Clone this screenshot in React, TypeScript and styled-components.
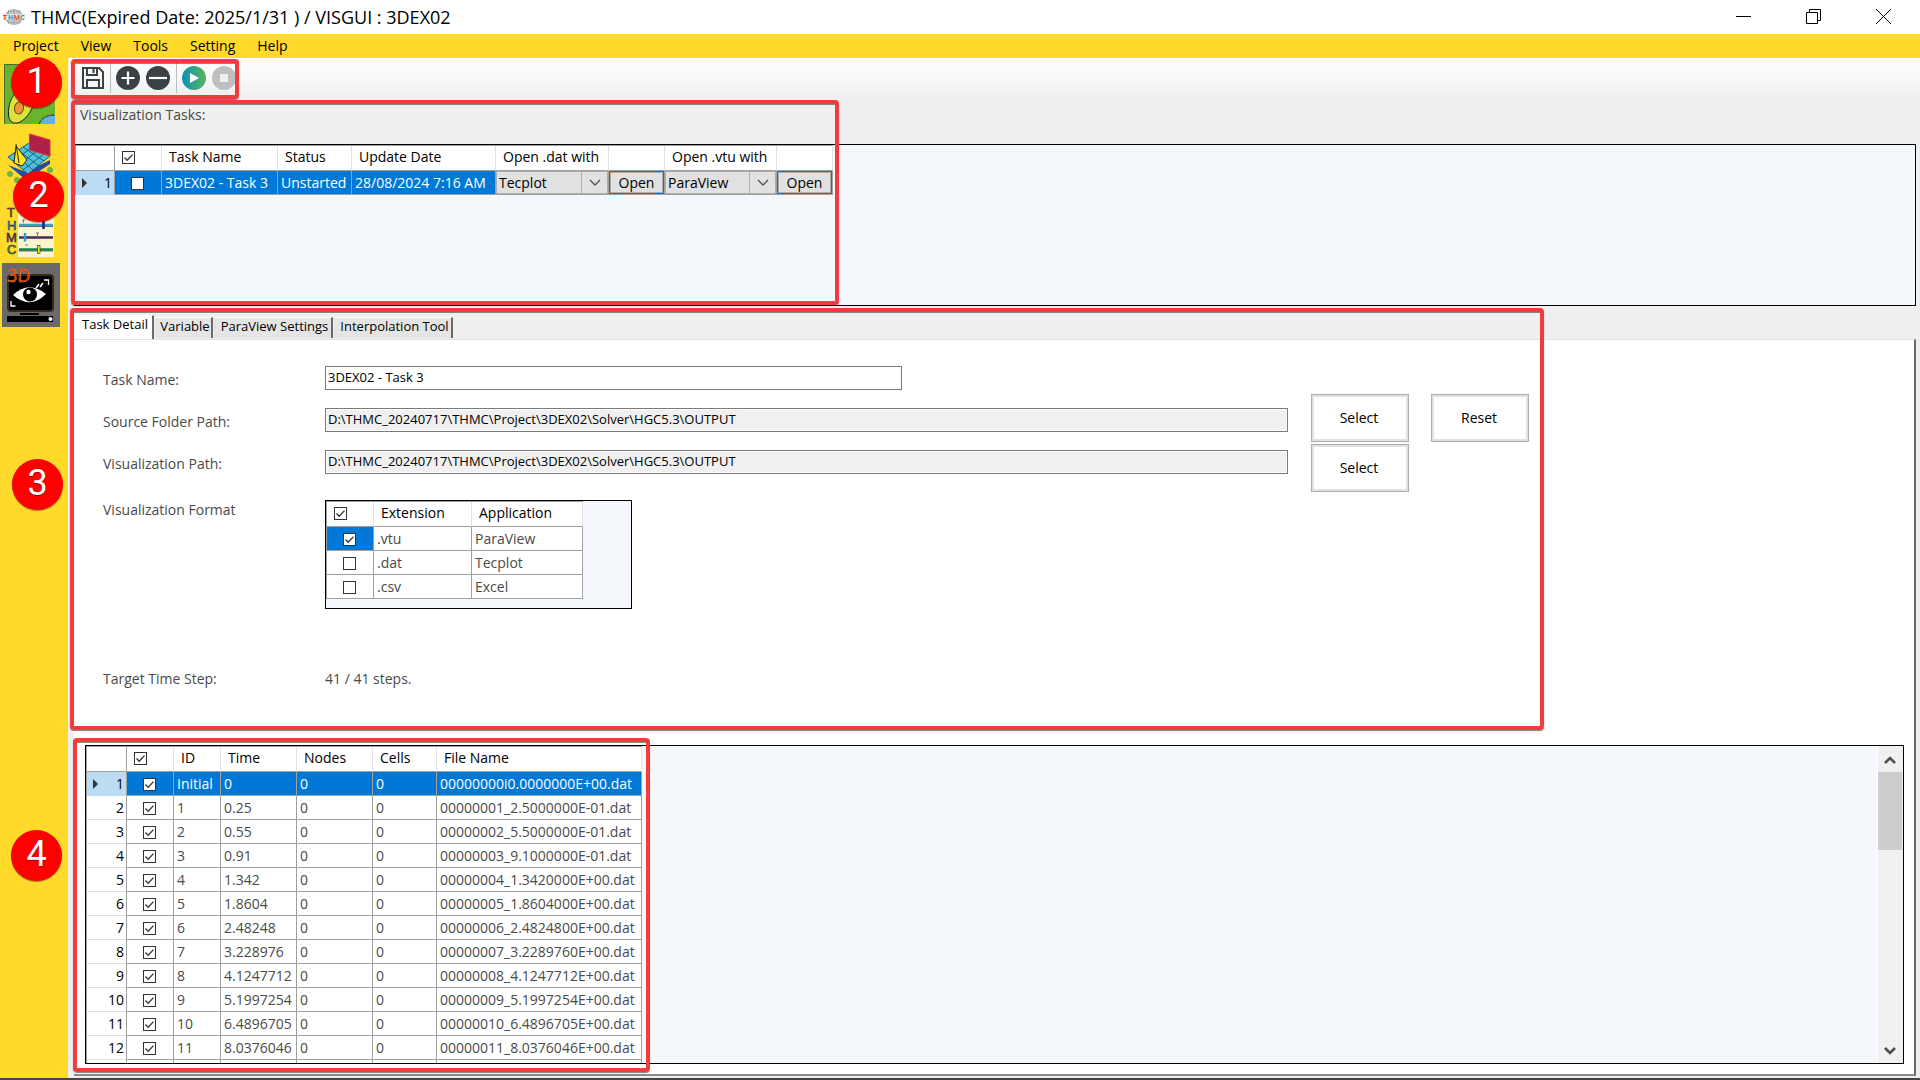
import React from "react";
import styled, { createGlobalStyle, css } from "styled-components";

const INK = "#4a4a4a";
const LINE = "#a0a0a0";
const BLUE = "#0078d7";
const YELLOW = "#ffda2b";
const RED = "#f23b3d";

const GlobalStyle = createGlobalStyle`
  * { box-sizing: border-box; }
  body { margin: 0; font: 14px/20px "Open Sans", "Noto Sans", sans-serif; color: #000; }
  button, input, select { font: inherit; color: inherit; margin: 0; }
`;

const Window = styled.div`
  position: relative;
  display: flex;
  flex-direction: column;
  height: 100vh;
  overflow: hidden;
  background: #efefef;
`;

/* ---------- title and menu ---------- */

const TitleBar = styled.header`
  display: flex;
  align-items: center;
  height: 34px;
  flex: none;
  padding: 0 2px 0 3px;
  background: #fff;
`;

const Title = styled.h1`
  flex: 1;
  margin: 0 0 0 6px;
  font-size: 18px;
  line-height: 32px;
  font-weight: 400;
`;

const CaptionButton = styled.button`
  display: grid;
  place-items: center;
  width: 70px;
  height: 34px;
  padding: 0 0 1px;
  border: 0;
  background: none;
`;

const MenuBar = styled.nav`
  display: flex;
  gap: 22px;
  height: 24px;
  flex: none;
  padding-left: 13px;
  background: ${YELLOW};
`;

const MenuItem = styled.button`
  padding: 0;
  border: 0;
  background: none;
  line-height: 24px;
`;

/* ---------- frame ---------- */

const Body = styled.div`
  display: flex;
  flex: 1;
  min-height: 0;
`;

const Sidebar = styled.aside`
  display: flex;
  flex-direction: column;
  align-items: flex-start;
  width: 68px;
  flex: none;
  padding: 7px 0 0 2px;
  gap: 2px;
  background: ${YELLOW};
`;

const SideButton = styled.button<{ $active?: boolean }>`
  width: 58px;
  height: 64px;
  padding: 0;
  border: 0;
  background: ${(p) => (p.$active ? "#696969" : "none")};
  svg { display: block; overflow: visible; }
`;

const Main = styled.main`
  display: flex;
  flex-direction: column;
  flex: 1;
  min-width: 0;
  padding: 0 4px 2px 6px;
`;

const Toolbar = styled.div`
  display: flex;
  align-items: center;
  gap: 6px;
  height: 40px;
  flex: none;
  margin: 0 -4px 0 -5px;
  padding-left: 13px;
  background: linear-gradient(#fdfdfd, #f7f7f7 60%, #efefef);
`;

const ToolButton = styled.button`
  padding: 0;
  border: 0;
  background: none;
  svg { display: block; }
`;

const ToolDivider = styled.span`
  width: 1px;
  height: 30px;
  margin-right: -1px;
  background: #bdbdbd;
`;

const Caption = styled.h2`
  flex: none;
  height: 46px;
  margin: 0;
  padding: 7px 0 0 6px;
  font-size: 14px;
  line-height: 20px;
  font-weight: 400;
  color: ${INK};
`;

const GridPanel = styled.div<{ $height?: number; $width?: number }>`
  display: flex;
  align-items: flex-start;
  justify-content: space-between;
  ${(p) => (p.$height ? css`height: ${p.$height}px; flex: none;` : css`flex: 1; min-height: 0;`)}
  ${(p) => p.$width && css`width: ${p.$width}px;`}
  overflow: hidden;
  border: 1px solid #000;
  background: #f4f7fc;
`;

/* ---------- data grid ---------- */

const Grid = styled.table`
  flex: none;
  table-layout: fixed;
  width: 0;
  border-collapse: separate;
  border-spacing: 0;
  border-top: 1px solid ${LINE};
  border-left: 1px solid ${LINE};
  background: #fff;
  white-space: nowrap;
`;

const HeadCell = styled.th<{ $strong?: boolean }>`
  height: 25px;
  padding: 0 0 2px 7px;
  border-right: 1px solid ${(p) => (p.$strong ? LINE : "#e2e2e2")};
  border-bottom: 1px solid ${LINE};
  color: #000;
  text-align: left;
  font-weight: 400;
  line-height: 22px;
`;

const Cell = styled.td<{ $selected?: boolean }>`
  height: 24px;
  padding: 0 0 0 3px;
  border-right: 1px solid ${LINE};
  border-bottom: 1px solid ${LINE};
  color: ${(p) => (p.$selected ? "#fff" : INK)};
  background: ${(p) => (p.$selected ? BLUE : "#fff")};
  line-height: 22px;
`;

const CheckCell = styled(Cell)`
  padding: 0 2px 0 0;
  text-align: center;
`;

const ControlCell = styled(Cell)`
  padding: 0;
  background: #e1e1e1;
  color: #000;
`;

const RowHead = styled.th<{ $current?: boolean }>`
  height: 24px;
  padding: 0 2px 0 6px;
  border-right: 1px solid ${LINE};
  border-bottom: 1px solid ${(p) => (p.$current ? "#bcdcf4" : "#e2e2e2")};
  background: ${(p) => (p.$current ? "#bcdcf4" : "#fff")};
  font-weight: 400;
  line-height: 22px;
`;

const RowHeadInner = styled.span`
  display: flex;
  align-items: center;
  justify-content: space-between;
`;

const Pointer = styled.span<{ $visible?: boolean }>`
  border: 5px solid transparent;
  border-right-width: 0;
  border-left-color: ${(p) => (p.$visible ? "#333" : "transparent")};
`;

const Tick = styled.input`
  appearance: none;
  width: 13px;
  height: 13px;
  border: 1px solid #333;
  background: #fff;
`;

const TickBox = styled.span`
  display: inline-grid;
  vertical-align: -2px;
  > * { grid-area: 1 / 1; }
  svg { pointer-events: none; }
`;

const Picker = styled.span`
  display: grid;
  grid-template-columns: 1fr 25px;
  align-items: center;
  height: 23px;
  border: 1px solid #adadad;
  svg { grid-area: 1 / 2; justify-self: center; pointer-events: none; }
`;

const PickerSelect = styled.select`
  grid-area: 1 / 1 / 2 / 3;
  appearance: none;
  height: 21px;
  padding: 0 0 0 2px;
  border: 0;
  border-radius: 0;
  background: linear-gradient(#adadad, #adadad) right 25px top / 1px 100% no-repeat #e1e1e1;
`;

const OpenButton = styled.button`
  display: block;
  width: 100%;
  height: 23px;
  padding: 0;
  border: 1px solid ${BLUE};
  outline: 1px solid #adadad;
  outline-offset: -2px;
  background: #e1e1e1;
  line-height: 20px;
`;

/* ---------- tabs and form ---------- */

const TabStrip = styled.div`
  display: flex;
  align-items: flex-end;
  gap: 1px;
  height: 33px;
  flex: none;
`;

const Tab = styled.button<{ $active?: boolean; $width: number }>`
  display: flex;
  align-items: flex-start;
  justify-content: center;
  width: ${(p) => p.$width}px;
  height: ${(p) => (p.$active ? 25 : 21)}px;
  margin-bottom: ${(p) => (p.$active ? -1 : 1)}px;
  padding: 0 0 0 4px;
  border: 0;
  border-top: 1px solid #fff;
  border-right: 2px solid #696969;
  background: ${(p) => (p.$active ? "#fff" : "#e5e5e5")};
  font-size: 13px;
  line-height: 16px;
  white-space: nowrap;
`;

const TabPage = styled.section`
  display: flex;
  flex-direction: column;
  flex: 1;
  min-height: 0;
  padding: 26px 10px 10px 11px;
  border-top: 1px solid #e3e3e3;
  border-right: 2px solid #696969;
  border-bottom: 2px solid #8a8a8a;
  background: #fff;
`;

const Columns = styled.div`
  display: flex;
  align-items: flex-start;
  padding-left: 18px;
  height: 379px;
  flex: none;
  color: ${INK};
`;

const Fields = styled.form`
  display: flex;
  flex-direction: column;
  gap: 18px;
`;

const Field = styled.div<{ $gapAbove?: number }>`
  display: flex;
  align-items: flex-start;
  margin-top: ${(p) => p.$gapAbove ?? 0}px;
`;

const FieldLabel = styled.label<{ $flush?: boolean }>`
  width: 222px;
  flex: none;
  padding-top: ${(p) => (p.$flush ? 0 : 4)}px;
  line-height: 19px;
`;

const TextBox = styled.input<{ $width: number }>`
  width: ${(p) => p.$width}px;
  height: 24px;
  padding: 0 2px 3px;
  border: 1px solid #7a7a7a;
  color: #000;
  background: #fff;
  font-size: 13px;
  &:read-only { background: #f0f0f0; box-shadow: inset 0 0 0 1px #fff; }
`;

const Actions = styled.div`
  display: grid;
  grid-template-columns: 98px 98px;
  gap: 2px 22px;
  padding: 28px 0 0 23px;
`;

const PushButton = styled.button`
  height: 48px;
  padding: 0 2px 0 0;
  border: 1px solid #adadad;
  box-shadow: inset 0 0 0 2px #e1e1e1;
  background: #fff;
  color: #000;
`;

const Value = styled.output`
  padding-top: 4px;
  line-height: 19px;
`;

/* ---------- scrollbar ---------- */

const ScrollBar = styled.div`
  display: flex;
  flex-direction: column;
  align-self: stretch;
  width: 26px;
  padding-right: 1px;
  background: #f0f0f0;
  border-left: 1px solid #fff;
`;

const ScrollArrow = styled.button`
  display: grid;
  place-items: center;
  height: 26px;
  padding: 2px 0 0;
  border: 0;
  background: none;
`;

const ScrollTrack = styled.div`
  flex: 1;
`;

const ScrollThumb = styled.div`
  height: 78px;
  background: #cdcdcd;
`;

const StatusEdge = styled.footer`
  height: 2px;
  flex: none;
  background: #444;
`;

/* ---------- guide marks that lie over the window ---------- */

const Highlight = styled.div<{ $x: number; $y: number; $w: number; $h: number }>`
  position: absolute;
  left: ${(p) => p.$x}px;
  top: ${(p) => p.$y}px;
  width: ${(p) => p.$w}px;
  height: ${(p) => p.$h}px;
  border: 4px solid ${RED};
  border-radius: 4px;
  box-shadow: 0 1px 1px rgba(0, 0, 0, 0.5), inset 0 1px 0 rgba(0, 0, 0, 0.45);
  pointer-events: none;
`;

const Marker = styled.span<{ $x: number; $y: number }>`
  position: absolute;
  left: ${(p) => p.$x}px;
  top: ${(p) => p.$y}px;
  width: 51px;
  height: 51px;
  border-radius: 50%;
  background: #fe0000;
  box-shadow: 0 1px 1px rgba(0, 0, 0, 0.4);
  color: #fff;
  font: 36px/48px Roboto, sans-serif;
  text-align: center;
  text-shadow: 0 1px 1px rgba(0, 0, 0, 0.4);
`;

/* ---------- pieces ---------- */

function CheckBox({ checked, label }: { checked: boolean; label: string }) {
  return (
    <TickBox>
      <Tick type="checkbox" defaultChecked={checked} aria-label={label} />
      {checked && (
        <svg width="13" height="13" viewBox="0 0 13 13" fill="none" stroke="#333" strokeWidth="1.3">
          <path d="M2.5 6.5 5.2 9.2 10.5 3.6" />
        </svg>
      )}
    </TickBox>
  );
}

function Chevron({ up, bold }: { up?: boolean; bold?: boolean }) {
  return (
    <svg width="12" height="8" viewBox="0 0 12 8" fill="none" stroke="#505050" strokeWidth={bold ? 2.6 : 1.3}>
      <path d={up ? "M1 7 6 2 11 7" : "M1 1 6 6 11 1"} />
    </svg>
  );
}

function RowNumber({ n, current }: { n: number; current?: boolean }) {
  return (
    <RowHead scope="row" $current={current}>
      <RowHeadInner>
        <Pointer $visible={current} />
        {n}
      </RowHeadInner>
    </RowHead>
  );
}

function AppLogo() {
  return (
    <svg width="22" height="18" viewBox="0 0 22 18">
      <ellipse cx="11" cy="9" rx="9" ry="8" fill="#c3c7c9" />
      <path d="M4 5 Q11 1 18 5M4 13Q11 17 18 13M11 1V17M6 2Q3 9 6 16M16 2Q19 9 16 16" fill="none" stroke="#8f969a" strokeWidth="1" strokeDasharray="2 1" />
      <rect x="0" y="6" width="22" height="6" fill="#e2e2e2" />
      <g fontFamily="Open Sans, sans-serif" fontSize="7" fontWeight="700">
        <text x="0" y="11.5" fill="#e0482e">T</text>
        <text x="5" y="11.5" fill="#2c9bd8">H</text>
        <text x="10.5" y="11.5" fill="#e0482e">M</text>
        <text x="17" y="11.5" fill="#3ba55c">C</text>
      </g>
    </svg>
  );
}

function AvocadoIcon() {
  return (
    <svg width="58" height="64" viewBox="2 65 58 64">
      <rect x="4" y="64" width="51" height="60" fill="#6ab42d" />
      <path d="M4.5 124V64.5H55" fill="none" stroke="#4e6a35" />
      <path d="M18 92C11 95 8 106 8.5 115C9 122 14 125 20 122C28 118 33 108 36 98L30 84Z" fill="#dbe23c" stroke="#222" strokeWidth="1" />
      <ellipse cx="19" cy="108" rx="4.5" ry="6" fill="#f29339" stroke="#6b4a16" transform="rotate(12 19 108)" />
      <path d="M39 124Q43 115 55 115V124Z" fill="#62b0e0" />
      <path d="M39 124Q43 115 55 115" fill="none" stroke="#222" strokeDasharray="4 1" />
    </svg>
  );
}

function MeshIcon() {
  return (
    <svg width="58" height="64" viewBox="2 131 58 64">
      <g fill="#6cb544">
        <circle cx="10" cy="174" r="3" /><circle cx="50" cy="170" r="3" /><circle cx="17" cy="180" r="3" />
      </g>
      <path d="M8 165 26 180 50 164V160L26 172Z" fill="#1f4fa3" />
      <path d="M8 157 29 143 50 156 28 174Z" fill="#4fc0dc" stroke="#17637c" />
      <path d="M13 161 34 146M18 166 39 149M23 170 45 153M13 153 33 170M18 150 39 166M23 147 44 161" stroke="#17637c" fill="none" />
      <path d="M29.5 134 50 140V156L29.5 150Z" fill="#b01f47" stroke="#e2332d" />
      <path d="M16 146 14 163 22 166 27 160Z" fill="#ffe81a" stroke="#222" />
      <path d="M16 144 19 163" stroke="#222" />
    </svg>
  );
}

function SlidersIcon() {
  return (
    <svg width="58" height="64" viewBox="2 197 58 64">
      <rect x="18" y="200" width="36" height="57" fill="#f8f5cf" />
      <g fontFamily="Liberation Sans, sans-serif" fontSize="13" stroke="#333" strokeWidth="0.6">
        <text x="7" y="216.5" fill="#c4392b">T</text>
        <text x="7" y="229.5" fill="#2a9fe0">H</text>
        <text x="6" y="242" fill="#6b2a55">M</text>
        <text x="7" y="254" fill="#2e9b3c">C</text>
      </g>
      <g strokeWidth="2.6">
        <path d="M19 225H53" stroke="#3d9fc4" /><path d="M19 237.5H53" stroke="#472b57" /><path d="M19 249.5H53" stroke="#17834a" />
      </g>
      <path d="M19 226.5H53M19 251H53" stroke="#222" strokeWidth="0.6" />
      <path d="M43.5 221V229" stroke="#1e1e8c" strokeWidth="2.5" />
      <path d="M25 233V241.5" stroke="#2e9fe6" strokeWidth="2.5" />
      <rect x="37.5" y="245.5" width="2.5" height="8" fill="#ffe81a" stroke="#222" strokeWidth="0.6" />
      <path d="M22 220H25M23.5 220V223M36 233H39M37.5 233V236M25 245H28" stroke="#b0386a" strokeWidth="0.8" />
    </svg>
  );
}

function ViewerIcon() {
  return (
    <svg width="58" height="64" viewBox="2 263 58 64">
      <rect x="8" y="275" width="45" height="36" rx="3" fill="#000" stroke="#3a2b18" strokeWidth="2" />
      <rect x="20" y="313" width="19" height="2" fill="#000" />
      <rect x="7" y="316" width="46" height="6" fill="#000" />
      <circle cx="50.5" cy="319" r="2" fill="#fff" />
      <path d="M13 295Q29 280 46 294Q30 310 13 295Z" fill="#fff" />
      <circle cx="30" cy="294.5" r="7" fill="#000" />
      <circle cx="28.5" cy="292" r="2.2" fill="#fff" />
      <path d="M44 280H48.5V285M11 301V306H15.5" fill="none" stroke="#fff" strokeWidth="1.3" />
      <path d="M36 288 39 284M40 287 43 283" stroke="#fff" strokeWidth="1.5" />
      <text x="7" y="282" fontFamily="Open Sans, sans-serif" fontSize="18" fill="#f01808" stroke="#d98a1a" strokeWidth="0.5">3D</text>
    </svg>
  );
}

const menus = ["Project", "View", "Tools", "Setting", "Help"];

const steps: [string, string, string][] = [
  ["Initial", "0", "00000000i0.0000000E+00.dat"],
  ["1", "0.25", "00000001_2.5000000E-01.dat"],
  ["2", "0.55", "00000002_5.5000000E-01.dat"],
  ["3", "0.91", "00000003_9.1000000E-01.dat"],
  ["4", "1.342", "00000004_1.3420000E+00.dat"],
  ["5", "1.8604", "00000005_1.8604000E+00.dat"],
  ["6", "2.48248", "00000006_2.4824800E+00.dat"],
  ["7", "3.228976", "00000007_3.2289760E+00.dat"],
  ["8", "4.1247712", "00000008_4.1247712E+00.dat"],
  ["9", "5.1997254", "00000009_5.1997254E+00.dat"],
  ["10", "6.4896705", "00000010_6.4896705E+00.dat"],
  ["11", "8.0376046", "00000011_8.0376046E+00.dat"],
];

const formats: [string, string, boolean][] = [
  [".vtu", "ParaView", true],
  [".dat", "Tecplot", false],
  [".csv", "Excel", false],
];

const tabs: [string, number][] = [
  ["Task Detail", 80],
  ["Variable", 58],
  ["ParaView Settings", 119],
  ["Interpolation Tool", 119],
];

const PATH = "D:\\THMC_20240717\\THMC\\Project\\3DEX02\\Solver\\HGC5.3\\OUTPUT";

function Cols({ widths }: { widths: number[] }) {
  return (
    <colgroup>
      {widths.map((w, i) => (
        <col key={i} style={{ width: w }} />
      ))}
    </colgroup>
  );
}

function OpenWith({ app, label }: { app: string; label: string }) {
  return (
    <>
      <ControlCell>
        <Picker>
          <PickerSelect aria-label={label} defaultValue={app}>
            <option>{app}</option>
          </PickerSelect>
          <Chevron />
        </Picker>
      </ControlCell>
      <ControlCell>
        <OpenButton>Open</OpenButton>
      </ControlCell>
    </>
  );
}

function TaskGrid() {
  return (
    <GridPanel $height={162}>
      <Grid>
        <Cols widths={[39, 47, 116, 74, 144, 113, 56, 112, 56]} />
        <thead>
          <tr>
            <HeadCell $strong />
            <HeadCell><CheckBox checked label="All tasks" /></HeadCell>
            <HeadCell>Task Name</HeadCell>
            <HeadCell>Status</HeadCell>
            <HeadCell>Update Date</HeadCell>
            <HeadCell>Open .dat with</HeadCell>
            <HeadCell />
            <HeadCell>Open .vtu with</HeadCell>
            <HeadCell />
          </tr>
        </thead>
        <tbody>
          <tr>
            <RowNumber n={1} current />
            <CheckCell $selected><CheckBox checked={false} label="Task 1" /></CheckCell>
            <Cell $selected>3DEX02 - Task 3</Cell>
            <Cell $selected>Unstarted</Cell>
            <Cell $selected>28/08/2024 7:16 AM</Cell>
            <OpenWith app="Tecplot" label="Open .dat with" />
            <OpenWith app="ParaView" label="Open .vtu with" />
          </tr>
        </tbody>
      </Grid>
    </GridPanel>
  );
}

function FormatGrid() {
  return (
    <GridPanel $height={109} $width={307}>
      <Grid>
        <Cols widths={[47, 98, 111]} />
        <thead>
          <tr>
            <HeadCell><CheckBox checked label="All formats" /></HeadCell>
            <HeadCell>Extension</HeadCell>
            <HeadCell>Application</HeadCell>
          </tr>
        </thead>
        <tbody>
          {formats.map(([ext, app, on]) => (
            <tr key={ext}>
              <CheckCell $selected={on}><CheckBox checked={on} label={ext} /></CheckCell>
              <Cell>{ext}</Cell>
              <Cell>{app}</Cell>
            </tr>
          ))}
        </tbody>
      </Grid>
    </GridPanel>
  );
}

function StepGrid() {
  return (
    <GridPanel>
      <Grid>
        <Cols widths={[40, 47, 47, 76, 76, 64, 205]} />
        <thead>
          <tr>
            <HeadCell $strong />
            <HeadCell><CheckBox checked label="All time steps" /></HeadCell>
            {["ID", "Time", "Nodes", "Cells", "File Name"].map((h) => (
              <HeadCell key={h}>{h}</HeadCell>
            ))}
          </tr>
        </thead>
        <tbody>
          {steps.map(([id, time, file], i) => (
            <tr key={id}>
              <RowNumber n={i + 1} current={i === 0} />
              <CheckCell $selected={i === 0}><CheckBox checked label={"Step " + id} /></CheckCell>
              {[id, time, "0", "0", file].map((text, c) => (
                <Cell key={c} $selected={i === 0}>{text}</Cell>
              ))}
            </tr>
          ))}
          <tr>
            <RowHead />
            {Array.from({ length: 6 }, (_, c) => <Cell key={c} />)}
          </tr>
        </tbody>
      </Grid>
      <ScrollBar>
        <ScrollArrow aria-label="Scroll up"><Chevron up bold /></ScrollArrow>
        <ScrollTrack><ScrollThumb /></ScrollTrack>
        <ScrollArrow aria-label="Scroll down"><Chevron bold /></ScrollArrow>
      </ScrollBar>
    </GridPanel>
  );
}

export default function App() {
  return (
    <Window>
      <GlobalStyle />
      <TitleBar>
        <AppLogo />
        <Title>THMC(Expired Date: 2025/1/31 ) / VISGUI : 3DEX02</Title>
        <CaptionButton aria-label="Minimize">
          <svg width="15" height="15" stroke="#000"><path d="M0 7.5H15" /></svg>
        </CaptionButton>
        <CaptionButton aria-label="Restore">
          <svg width="15" height="15" fill="none" stroke="#000"><path d="M.5 3.5H11.5V14.5H.5ZM3.5 3.5V.5H14.5V11.5H11.5" /></svg>
        </CaptionButton>
        <CaptionButton aria-label="Close">
          <svg width="15" height="15" stroke="#000"><path d="M0 0 15 15M15 0 0 15" /></svg>
        </CaptionButton>
      </TitleBar>
      <MenuBar>
        {menus.map((m) => <MenuItem key={m}>{m}</MenuItem>)}
      </MenuBar>
      <Body>
        <Sidebar>
          <SideButton aria-label="Map"><AvocadoIcon /></SideButton>
          <SideButton aria-label="Mesh"><MeshIcon /></SideButton>
          <SideButton aria-label="Parameters"><SlidersIcon /></SideButton>
          <SideButton aria-label="Visualization" $active><ViewerIcon /></SideButton>
        </Sidebar>
        <Main>
          <Toolbar>
            <ToolButton aria-label="Save">
              <svg width="22" height="22" viewBox="1 1 22 22" fill="none" stroke="#3b4245" strokeWidth="2">
                <path d="M2 2H18L22 6V22H2Z" />
                <path d="M6 2V9H16V2M6 22V14H18V22" />
                <path d="M12.5 3V7" />
              </svg>
            </ToolButton>
            <ToolDivider />
            <ToolButton aria-label="Add">
              <svg width="24" height="24" stroke="#fff" strokeWidth="2.2">
                <circle cx="12" cy="12" r="12" fill="#3b4245" stroke="none" />
                <path d="M12 5.5V18.5M5.5 12H18.5" />
              </svg>
            </ToolButton>
            <ToolButton aria-label="Remove">
              <svg width="24" height="24" stroke="#fff" strokeWidth="2.2">
                <circle cx="12" cy="12" r="12" fill="#3b4245" stroke="none" />
                <path d="M3 12H21" />
              </svg>
            </ToolButton>
            <ToolDivider />
            <ToolButton aria-label="Run">
              <svg width="24" height="24">
                <defs>
                  <linearGradient id="run"><stop stopColor="#0796b8" /><stop offset="1" stopColor="#5fb35b" /></linearGradient>
                </defs>
                <circle cx="12" cy="12" r="12" fill="url(#run)" />
                <path d="M8 7 17 12 8 17Z" fill="#fff" />
              </svg>
            </ToolButton>
            <ToolButton aria-label="Stop">
              <svg width="24" height="24">
                <circle cx="12" cy="12" r="12" fill="#bfbfbf" />
                <rect x="8" y="8" width="8" height="8" fill="#f1f1f1" />
              </svg>
            </ToolButton>
          </Toolbar>
          <Caption>Visualization Tasks:</Caption>
          <TaskGrid />
          <TabStrip role="tablist">
            {tabs.map(([name, width], i) => (
              <Tab key={name} role="tab" $active={i === 0} $width={width}>{name}</Tab>
            ))}
          </TabStrip>
          <TabPage>
            <Columns>
              <Fields>
                <Field>
                  <FieldLabel htmlFor="task">Task Name:</FieldLabel>
                  <TextBox id="task" $width={577} defaultValue="3DEX02 - Task 3" />
                </Field>
                <Field>
                  <FieldLabel htmlFor="source">Source Folder Path:</FieldLabel>
                  <TextBox id="source" $width={963} readOnly value={PATH} />
                </Field>
                <Field>
                  <FieldLabel htmlFor="target">Visualization Path:</FieldLabel>
                  <TextBox id="target" $width={963} readOnly value={PATH} />
                </Field>
                <Field $gapAbove={8}>
                  <FieldLabel as="span" $flush>Visualization Format</FieldLabel>
                  <FormatGrid />
                </Field>
                <Field $gapAbove={38}>
                  <FieldLabel htmlFor="steps">Target Time Step:</FieldLabel>
                  <Value id="steps">41 / 41 steps.</Value>
                </Field>
              </Fields>
              <Actions>
                <PushButton>Select</PushButton>
                <PushButton>Reset</PushButton>
                <PushButton>Select</PushButton>
              </Actions>
            </Columns>
            <StepGrid />
          </TabPage>
        </Main>
      </Body>
      <StatusEdge />

      <Highlight $x={71} $y={59} $w={168} $h={40} />
      <Highlight $x={71} $y={100} $w={768} $h={205} />
      <Highlight $x={70} $y={308} $w={1474} $h={422} />
      <Highlight $x={73} $y={738} $w={577} $h={334} />
      <Marker $x={11} $y={57}>1</Marker>
      <Marker $x={13} $y={171}>2</Marker>
      <Marker $x={12} $y={459}>3</Marker>
      <Marker $x={11} $y={830}>4</Marker>
    </Window>
  );
}
